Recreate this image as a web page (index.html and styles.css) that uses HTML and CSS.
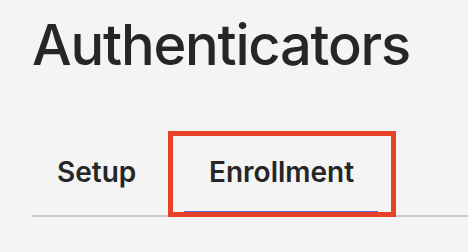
FILE: index.html
```html
<!DOCTYPE html>
<html>
<head>
<meta charset="utf-8">
<link rel="stylesheet" href="styles.css">
</head>
<body>
<div class="page">
  <h1 class="title">Authenticators</h1>
  <div class="tabs">
    <div class="tab">Setup</div>
    <div class="tab tab-active">Enrollment</div>
  </div>
</div>
</body>
</html>
```
FILE: styles.css
```css
html, body {
  margin: 0;
  padding: 0;
  background: #f4f4f4;
}
.page {
  padding: 17px 0 0 32px;
  font-family: Inter, "Noto Sans", sans-serif;
  color: #262626;
}
.title {
  margin: 0;
  font-size: 56px;
  font-weight: 500;
  line-height: 56px;
  letter-spacing: -1.2px;
}
.tabs {
  display: flex;
  margin-top: 63px;
  padding-bottom: 3px;
  border-bottom: 2px solid #cccccc;
}
.tab {
  display: flex;
  align-items: center;
  height: 76px;
  padding-bottom: 4px;
  font-size: 28px;
  font-weight: 600;
  box-sizing: border-box;
}
.tab:first-child {
  width: 141px;
  padding-left: 25px;
}
.tab-active {
  position: relative;
  width: 218px;
  padding-left: 36px;
  outline: 5px solid #e8412a;
}
.tab-active::after {
  content: "";
  position: absolute;
  left: 11px;
  right: 13px;
  bottom: 0;
  height: 1.5px;
  background: #5b6bd6;
}
```
